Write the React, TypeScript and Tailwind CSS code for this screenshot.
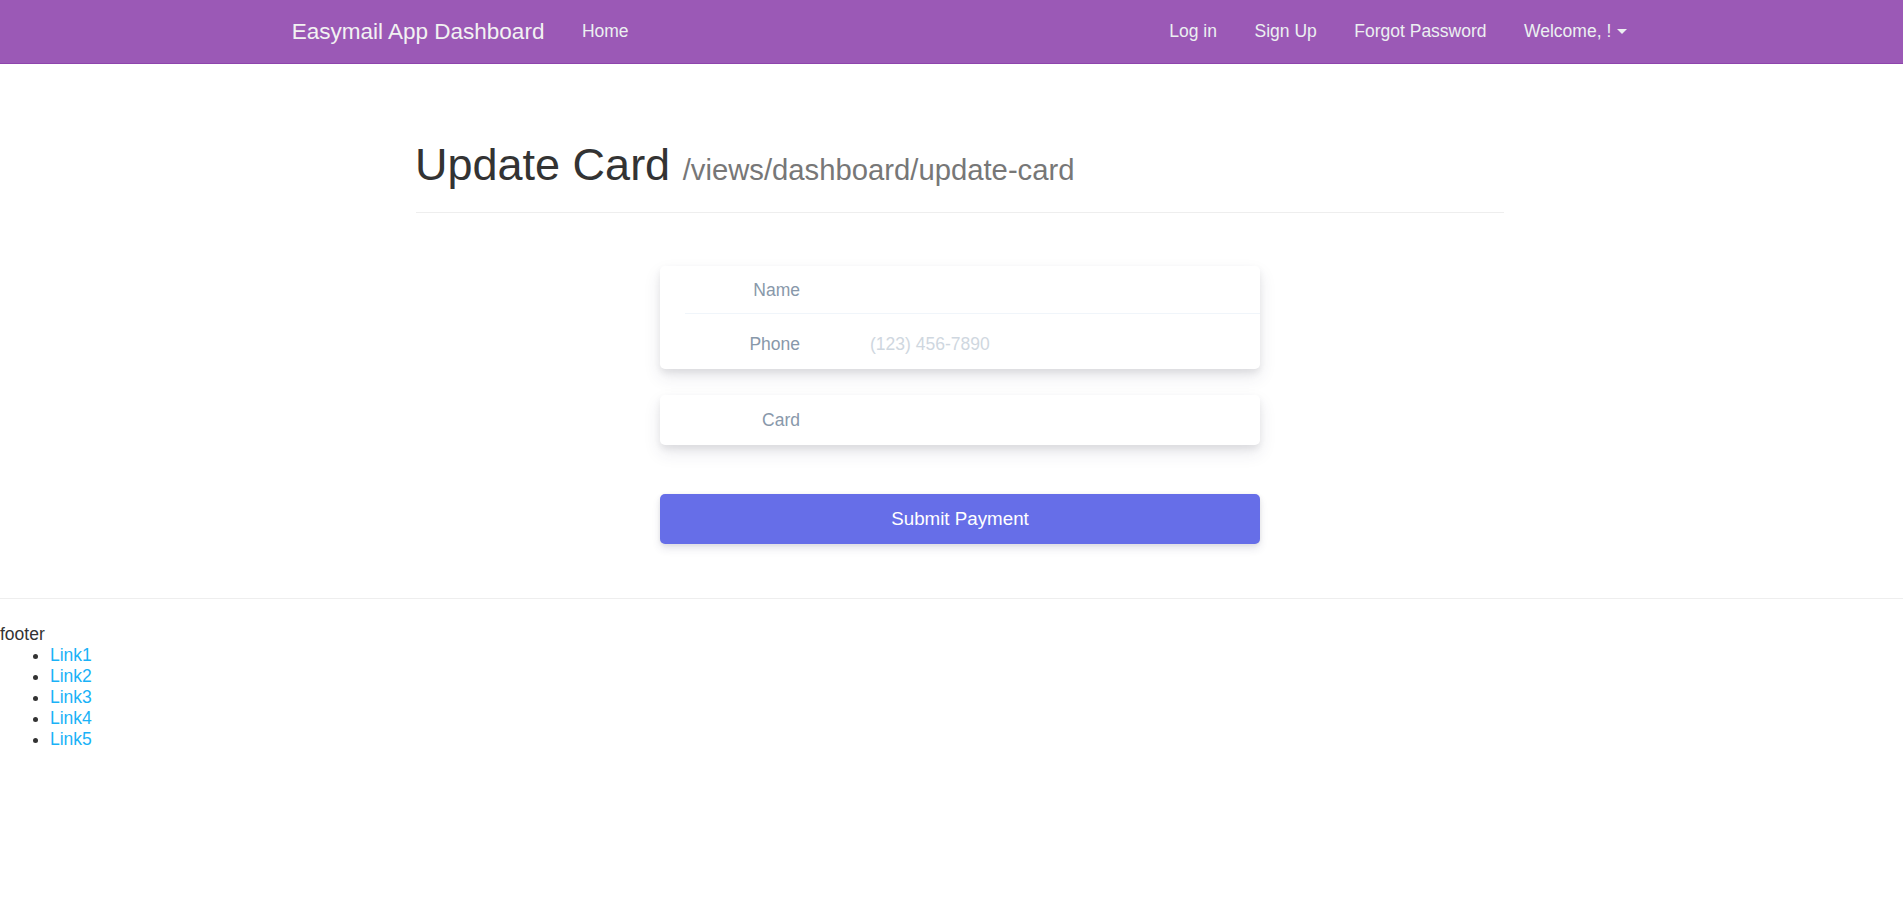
import React from 'react'

const font = { fontFamily: '"Liberation Sans", Arial, Helvetica, sans-serif' }

function NavBar() {
  const right = ['Log in', 'Sign Up', 'Forgot Password']
  return (
    <nav className="h-[64px] bg-[#9b59b6] border-b border-[#8e44ad]">
      <div className="ml-[273px] w-[1373px] h-full flex items-center justify-between">
        <div className="flex items-center">
          <a className="px-[18.75px] text-[22.5px] leading-[25px] text-[#f2f2f2]">Easymail App Dashboard</a>
          <a className="px-[18.75px] text-[17.5px] leading-[25px] text-[#ecf0f1]">Home</a>
        </div>
        <div className="flex items-center">
          {right.map((label) => (
            <a key={label} className="px-[18.75px] text-[17.5px] leading-[25px] text-[#ecf0f1]">
              {label}
            </a>
          ))}
          <a className="px-[18.75px] text-[17.5px] leading-[25px] text-[#ecf0f1] flex items-center">
            Welcome, !
            <span className="ml-[6px] inline-block w-0 h-0 border-t-[5px] border-x-[5px] border-x-transparent border-t-[#ecf0f1]" />
          </a>
        </div>
      </div>
    </nav>
  )
}

function Row({ label, placeholder, extra }: { label: string; placeholder?: string; extra?: string }) {
  return (
    <div className={`flex items-center text-[17.5px] ${extra ?? ''}`}>
      <span className="w-[140px] shrink-0 text-right text-[#8898aa]">{label}</span>
      <span className="ml-[70px] text-[#cfd7e0]">{placeholder}</span>
    </div>
  )
}

const cardShadow = 'shadow-[0_8px_17px_0_rgba(49,49,93,0.10),0_4px_7px_0_rgba(0,0,0,0.08)]'

export default function App() {
  return (
    <div className="min-h-[908px] bg-white text-[#333]" style={font}>
      <NavBar />

      <main className="ml-[416px] w-[1088px] pt-[76px]">
        {/* Page header */}
        <div className="pb-[22.75px] border-b border-[#eeeeee]">
          <h1 className="text-[45px] leading-[49.5px] text-[#333] -ml-[1px]">
            Update Card <small className="text-[29.25px] leading-none text-[#777]">/views/dashboard/update-card</small>
          </h1>
        </div>

        {/* Payment form */}
        <div className="w-[600px] mx-auto mt-[53px]">
          <div className={`bg-white rounded-[5px] ${cardShadow}`}>
            <div className="ml-[25px] h-[48px] border-b border-[#f0f5fa]">
              <Row label="Name" extra="h-full -ml-[25px]" />
            </div>
            <div className="h-[55px] pt-[4px]">
              <Row label="Phone" placeholder="(123) 456-7890" extra="h-full" />
            </div>
          </div>

          <div className={`mt-[26px] h-[50px] bg-white rounded-[5px] ${cardShadow}`}>
            <Row label="Card" extra="h-full" />
          </div>

          <button className="mt-[49px] w-full h-[50px] rounded-[5px] bg-[#666ee8] text-white text-[18.75px] shadow-[0_5px_8px_rgba(50,50,93,0.11),0_1px_4px_rgba(0,0,0,0.08)]">
            Submit Payment
          </button>
        </div>
      </main>

      {/* Footer */}
      <footer className="mt-[54px] border-t border-[#eeeeee] pt-[25px] text-[17.5px] leading-[21px] text-[#333]">
        <div>footer</div>
        <ul className="list-disc pl-[50px]">
          {['Link1', 'Link2', 'Link3', 'Link4', 'Link5'].map((l) => (
            <li key={l}>
              <a className="text-[#1ab2f7]">{l}</a>
            </li>
          ))}
        </ul>
      </footer>
    </div>
  )
}
